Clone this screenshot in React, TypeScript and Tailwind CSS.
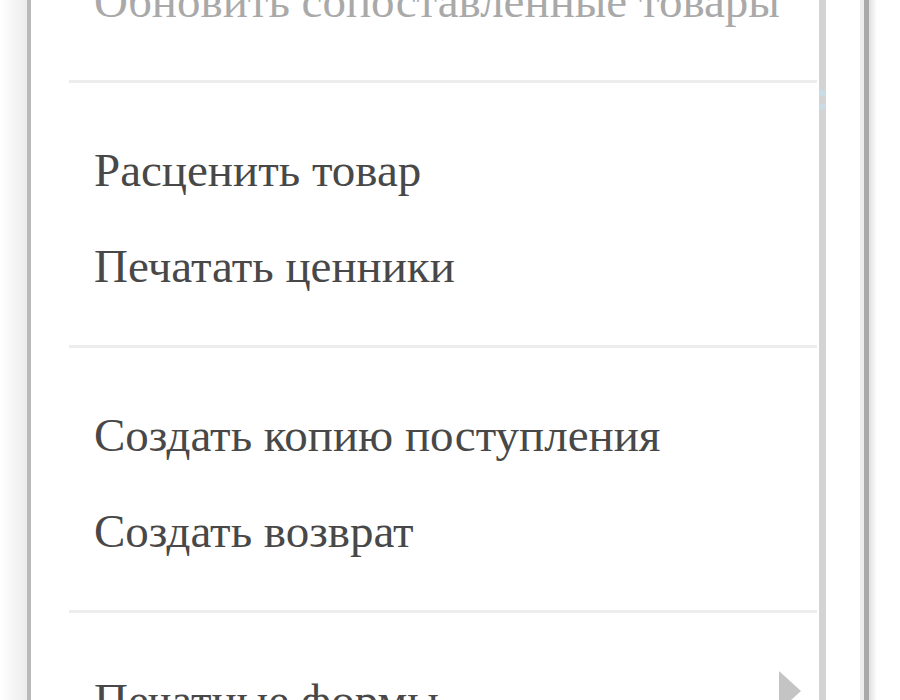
import React from "react";

const Item = ({ label, disabled, submenu }: { label: string; disabled?: boolean; submenu?: boolean }) => (
  <div
    className={`relative flex h-[96px] items-center pl-[63px] text-[47px] leading-none ${
      disabled ? "text-[#a9a9a9]" : "text-[#484848]"
    }`}
    style={{ fontFamily: '"Liberation Serif", "Times New Roman", serif' }}
  >
    <span>{label}</span>
    {submenu && (
      <svg className="absolute left-[748px] top-[19px]" width="24" height="44" viewBox="0 0 24 44">
        <path d="M0 0 L22 20 L0 40 Z" fill="#c4c4c4" />
      </svg>
    )}
  </div>
);

const Sep = () => <div className="ml-[38px] mr-[2px] mt-[31px] mb-[39px] h-[3px] bg-[#ededed]" />;

export default function App() {
  return (
    <div className="relative h-[700px] w-[900px] overflow-hidden bg-white">
      <div className="flex h-full">
        <div className="w-[27px] bg-gradient-to-r from-white to-[#ececec]" />
        <div className="w-[4px] bg-[#b9b9b9]" />
        <div className="relative flex w-[788px] flex-col bg-white">
          <div className="-mt-[47px] flex flex-col">
            <Item label="Обновить сопоставленные товары" disabled />
            <Sep />
            <Item label="Расценить товар" />
            <Item label="Печатать ценники" />
            <Sep />
            <Item label="Создать копию поступления" />
            <Item label="Создать возврат" />
            <Sep />
            <Item label="Печатные формы" submenu />
          </div>
        </div>
        <div className="flex w-[7px] flex-col bg-[#d3d3d3]">
          <div className="h-[90px]" />
          <div className="h-[6px] bg-[#c9dbe6]" />
          <div className="h-[8px]" />
          <div className="h-[5px] bg-[#c9dbe6]" />
          <div className="flex-1" />
        </div>
        <div className="w-[34px] bg-white" />
        <div className="w-[4px] bg-[#ececec]" />
        <div className="w-[5px] bg-[#a9a9a9]" />
        <div className="w-[8px] bg-gradient-to-r from-[#e0e0e0] to-white" />
        <div className="flex-1 bg-white" />
      </div>
    </div>
  );
}
